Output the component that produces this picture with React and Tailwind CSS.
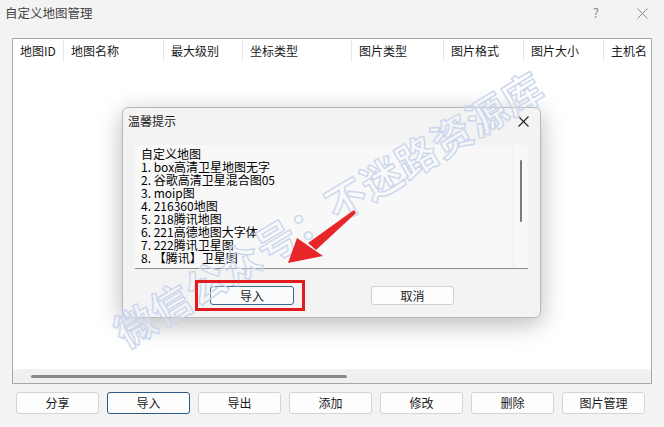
import React from 'react';

const font = { fontFamily: '"Noto Sans CJK SC", "Noto Sans", sans-serif' };

const columns = [
  { name: '地图ID', w: 'w-[51px]' },
  { name: '地图名称', w: 'w-[100px]' },
  { name: '最大级别', w: 'w-[79px]' },
  { name: '坐标类型', w: 'w-[109px]' },
  { name: '图片类型', w: 'w-[92px]' },
  { name: '图片格式', w: 'w-[80px]' },
  { name: '图片大小', w: 'w-[80px]' },
  { name: '主机名', w: 'w-[60px]' },
];

const actions = ['分享', '导入', '导出', '添加', '修改', '删除', '图片管理'];

const maps = [
  '自定义地图',
  '1. box高清卫星地图无字',
  '2. 谷歌高清卫星混合图05',
  '3. moip图',
  '4. 216360地图',
  '5. 218腾讯地图',
  '6. 221高德地图大字体',
  '7. 222腾讯卫星图',
  '8. 【腾讯】卫星图',
];

export default function App() {
  return (
    <div className="relative w-[664px] h-[427px] overflow-hidden bg-[#f3f3f3] text-[#1a1a1a]" style={font}>
      {/* Title bar */}
      <div className="flex items-center justify-between h-[26px] pl-[5px] pr-[16px]">
        <span className="text-[12.5px] text-[#444]">自定义地图管理</span>
        <div className="flex items-center gap-[38px] text-[#888]">
          <span className="text-[13px]">?</span>
          <svg width="11" height="11" viewBox="0 0 11 11"><path d="M0.5 0.5L10.5 10.5M10.5 0.5L0.5 10.5" stroke="#888" strokeWidth="1" /></svg>
        </div>
      </div>

      {/* Table */}
      <div className="mx-[12px] mt-[12px] h-[346px] border border-[#a8a8a8] bg-white flex flex-col">
        <div className="flex h-[24px] items-center text-[12px]">
          {columns.map((c, i) => (
            <div key={c.name} className={`${c.w} shrink-0 pl-[7px] h-[22px] flex items-center ${i < columns.length - 1 ? 'border-r border-[#e8e8e8]' : ''}`}>
              {c.name}
            </div>
          ))}
        </div>
        <div className="flex-1" />
        <div className="h-[14px] bg-[#f0f0f0] flex items-center px-[18px]">
          <div className="w-[316px] h-[3px] rounded-full bg-[#8a8a8a]" />
        </div>
      </div>

      {/* Bottom buttons */}
      <div className="flex gap-[8px] pl-[16px] mt-[8px]">
        {actions.map((a) => (
          <button
            key={a}
            className={`w-[83px] h-[22px] rounded-[3px] bg-[#fdfdfd] text-[12px] flex items-center justify-center ${a === '导入' ? 'border border-[#2c5a85]' : 'border border-[#d4d4d4]'}`}
          >
            {a}
          </button>
        ))}
      </div>

      {/* Dialog */}
      <div className="absolute left-[122px] top-[107px] w-[419px] h-[211px] rounded-[6px] bg-[#f3f3f3] border border-[#b8b8b8] shadow-[0_6px_24px_rgba(0,0,0,0.28)] flex flex-col">
        <div className="flex items-center justify-between h-[24px] pl-[5px] pr-[11px] mt-[1px]">
          <span className="text-[12px]">温馨提示</span>
          <svg width="11" height="11" viewBox="0 0 11 11"><path d="M0.5 0.5L10.5 10.5M10.5 0.5L0.5 10.5" stroke="#222" strokeWidth="1.1" /></svg>
        </div>
        <div className="mx-[12px] mt-[12px] h-[124px] bg-[#f8f8f8] border-b border-[#8c8c8c] flex">
          <div className="flex-1 pl-[6px] pt-[2px] text-[12px] leading-[13px] text-black">
            {maps.map((m) => (
              <div key={m}>{m}</div>
            ))}
          </div>
          <div className="w-[15px] border-l border-[#ececec] flex justify-center pt-[15px]">
            <div className="w-[2px] h-[62px] bg-[#7a7a7a] rounded-full" />
          </div>
        </div>
        <div className="flex mt-[17px] pl-[87px] gap-[77px]">
          <button className="w-[84px] h-[19px] rounded-[3px] bg-[#f9fbfd] border border-[#3c6a8e] text-[12px] flex items-center justify-center">导入</button>
          <button className="w-[83px] h-[19px] rounded-[3px] bg-[#fdfdfd] border border-[#d0d0d0] text-[12px] flex items-center justify-center">取消</button>
        </div>
      </div>

      {/* Watermark */}
      <div
        className="absolute left-[328px] top-[208px] -translate-x-1/2 -translate-y-1/2 -rotate-[31deg] whitespace-nowrap text-[40px] font-bold text-white/20 [-webkit-text-stroke:1.4px_#cbd7ed] tracking-[1px]"
      >
        微信公众号：不迷路资源库
      </div>

      {/* Highlight box */}
      <div className="absolute left-[195px] top-[280px] w-[110px] h-[31px] border-[3px] border-[#e21b1e]" />

      {/* Arrow */}
      <svg className="absolute left-0 top-0" width="664" height="427" viewBox="0 0 664 427">
        <polygon points="354,210 356,213 316,250 308,243" fill="#e8262a" />
        <polygon points="288,263 297,238 323,256" fill="#e8262a" />
      </svg>
    </div>
  );
}
